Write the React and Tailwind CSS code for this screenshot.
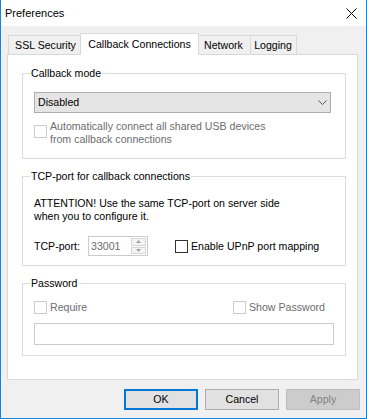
import React from "react";

const Checkbox = ({ disabled }) => (
    <div
        className={`w-[13px] h-[13px] shrink-0 border bg-white ${disabled ? "border-[#cccccc]" : "border-[#333333]"}`}
    />
);

const Group = ({ label, className, children }) => (
    <div className={`ml-[14px] w-[324px] border border-[#dcdcdc] flex flex-col ${className}`}>
        <span className="self-start -mt-[7px] ml-[7px] px-[1px] bg-white leading-[13px]">{label}</span>
        {children}
    </div>
);

const Tab = ({ label, className }) => (
    <div className={`h-[20px] flex items-center justify-center border-t border-[#d9d9d9] bg-[#f0f0f0] ${className}`}>
        {label}
    </div>
);

const Button = ({ label, variant }) => {
    const styles = {
        default: "border-2 border-[#0078d7] bg-[#e1e1e1] text-black",
        normal: "border border-[#adadad] bg-[#e1e1e1] text-black",
        disabled: "border border-[#bfbfbf] bg-[#cccccc] text-[#838383]",
    };
    return (
        <div className={`w-[74px] h-[21px] flex items-center justify-center ${styles[variant]}`}>
            {label}
        </div>
    );
};

export default function App() {
    return (
        <div className="w-[367px] h-[419px] bg-[#f0f0f0] border-x border-b border-[#1883d7] flex flex-col font-['Liberation_Sans',Arial,sans-serif] text-[10.6px] leading-[13px] text-black">
            {/* Title bar */}
            <div className="h-[26px] shrink-0 bg-white flex items-center justify-between pl-[4px] pr-[9px]">
                <span className="text-[11px]">Preferences</span>
                <svg width="11" height="11" viewBox="0 0 11 11">
                    <path d="M0.5 0.5 L10.5 10.5 M10.5 0.5 L0.5 10.5" stroke="#000" strokeWidth="1" />
                </svg>
            </div>

            <div className="ml-[6px] w-[351px] mt-[7px] flex flex-col">
                {/* Tabs */}
                <div className="flex items-end h-[22px] -mb-px relative z-10 pl-[1px]">
                    <Tab label="SSL Security" className="w-[72px] border-l pl-[2px] border-b" />
                    <div className="w-[119px] h-[22px] bg-white border-t border-x border-[#d9d9d9] flex items-center justify-center pb-[1px]">
                        Callback Connections
                    </div>
                    <Tab label="Network" className="w-[52px] border-r border-b pr-[2px]" />
                    <Tab label="Logging" className="w-[46px] border-r border-b pr-[1px]" />
                </div>

                {/* Panel */}
                <div className="h-[326px] bg-white border border-[#d9d9d9] flex flex-col">
                    <Group label="Callback mode" className="mt-[18px] h-[86px]">
                        <div className="mt-[12px] ml-[11px] w-[297px] h-[21px] bg-[#e5e5e5] border border-[#adadad] flex items-center justify-between pl-[3px] pr-[3px]">
                            <span>Disabled</span>
                            <svg width="9" height="5" viewBox="0 0 9 5">
                                <path d="M0.5 0.5 L4.5 4.5 L8.5 0.5" stroke="#555" fill="none" strokeWidth="1" />
                            </svg>
                        </div>
                        <div className="mt-[7px] ml-[11px] flex items-start">
                            <div className="mt-[5px]">
                                <Checkbox disabled />
                            </div>
                            <div className="ml-[3px] text-[#6d6d6d]">
                                <div>Automatically connect all shared USB devices</div>
                                <div>from callback connections</div>
                            </div>
                        </div>
                    </Group>

                    <Group label="TCP-port for callback connections" className="mt-[17px] h-[90px]">
                        <div className="mt-[14px] ml-[11px]">
                            <div>ATTENTION! Use the same TCP-port on server side</div>
                            <div>when you to configure it.</div>
                        </div>
                        <div className="mt-[13px] ml-[11px] h-[20px] flex items-center">
                            <span className="w-[54px]">TCP-port:</span>
                            <div className="w-[60px] h-[20px] border border-[#cccccc] bg-white flex">
                                <span className="flex-1 pl-[2px] flex items-center text-[#6d6d6d]">33001</span>
                                <div className="w-[16px] flex flex-col py-[1px] pr-[1px] gap-[1px]">
                                    <div className="flex-1 border border-[#d6d6d6] bg-[#f4f4f4] flex items-center justify-center">
                                        <svg width="5" height="3" viewBox="0 0 5 3">
                                            <path d="M0 3 L2.5 0 L5 3 Z" fill="#a0a0a0" />
                                        </svg>
                                    </div>
                                    <div className="flex-1 border border-[#d6d6d6] bg-[#f4f4f4] flex items-center justify-center">
                                        <svg width="5" height="3" viewBox="0 0 5 3">
                                            <path d="M0 0 L2.5 3 L5 0 Z" fill="#a0a0a0" />
                                        </svg>
                                    </div>
                                </div>
                            </div>
                            <div className="ml-[27px]">
                                <Checkbox />
                            </div>
                            <span className="ml-[3px]">Enable UPnP port mapping</span>
                        </div>
                    </Group>

                    <Group label="Password" className="mt-[17px] h-[73px]">
                        <div className="mt-[11px] ml-[11px] h-[13px] flex items-center text-[#6d6d6d]">
                            <div className="w-[199px] flex items-center">
                                <Checkbox disabled />
                                <span className="ml-[3px]">Require</span>
                            </div>
                            <Checkbox disabled />
                            <span className="ml-[3px]">Show Password</span>
                        </div>
                        <div className="mt-[9px] ml-[11px] w-[300px] h-[22px] border border-[#cccccc] bg-white" />
                    </Group>
                </div>
            </div>

            {/* Buttons */}
            <div className="mt-[9px] pr-[6px] flex justify-end gap-[7px]">
                <Button label="OK" variant="default" />
                <Button label="Cancel" variant="normal" />
                <Button label="Apply" variant="disabled" />
            </div>
        </div>
    );
}
